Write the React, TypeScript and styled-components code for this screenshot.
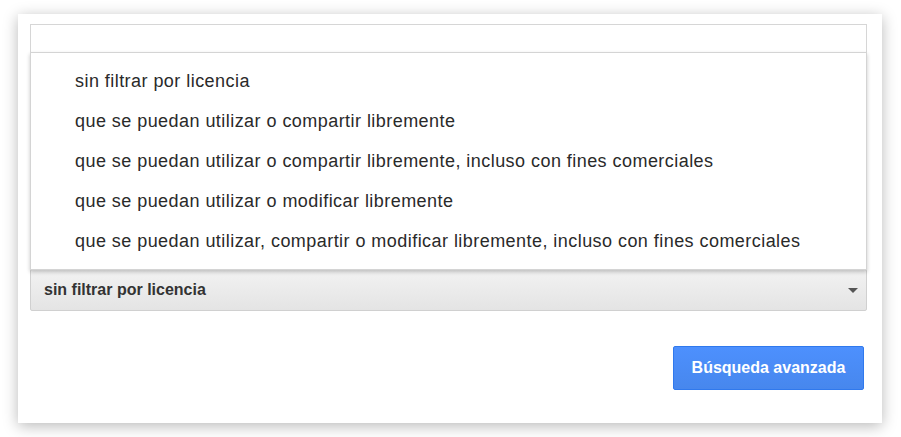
import styled, { createGlobalStyle } from "styled-components";

const GlobalStyle = createGlobalStyle`
  html, body {
    margin: 0;
    padding: 0;
    background: #ffffff;
  }
  body {
    font-family: "Liberation Sans", Arial, sans-serif;
  }
`;

const licenses = [
  "sin filtrar por licencia",
  "que se puedan utilizar o compartir libremente",
  "que se puedan utilizar o compartir libremente, incluso con fines comerciales",
  "que se puedan utilizar o modificar libremente",
  "que se puedan utilizar, compartir o modificar libremente, incluso con fines comerciales",
];

const Page = styled.div`
  padding: 14px 19px 14px 18px;
  width: 864px;
`;

const Card = styled.div`
  box-sizing: border-box;
  width: 864px;
  height: 409px;
  background: #fff;
  padding: 10px 15px 0 12px;
  box-shadow: 0 3px 14px rgba(0, 0, 0, 0.28);
  display: flex;
  flex-direction: column;
`;

const Field = styled.div`
  position: relative;
`;

const SearchInput = styled.div`
  box-sizing: border-box;
  height: 28px;
  border: 1px solid #d6d6d6;
  border-bottom: none;
  background: #fff;
`;

const Menu = styled.ul`
  position: absolute;
  top: 100%;
  left: 0;
  right: 0;
  margin: 0;
  padding: 8px 0;
  list-style: none;
  background: #fff;
  border: 1px solid #d4d4d4;
  box-shadow: 0 2px 4px rgba(0, 0, 0, 0.22);
  z-index: 2;
`;

const MenuItem = styled.li`
  height: 40px;
  line-height: 40px;
  padding-left: 44px;
  font-size: 18px;
  letter-spacing: 0.45px;
  color: #2a2a2a;
  white-space: nowrap;
`;

const Select = styled.div`
  box-sizing: border-box;
  margin-top: 217px;
  height: 42px;
  border: 1px solid #d0d0d0;
  border-radius: 2px;
  background: linear-gradient(#f2f2f2, #e4e4e4);
  display: flex;
  align-items: center;
  justify-content: space-between;
  padding: 0 8px 0 13px;
  font-size: 16px;
  font-weight: bold;
  color: #333;
`;

const Arrow = styled.span`
  width: 0;
  height: 0;
  border-left: 5px solid transparent;
  border-right: 5px solid transparent;
  border-top: 5px solid #555;
`;

const Actions = styled.div`
  display: flex;
  justify-content: flex-end;
  margin-top: 35px;
  padding-right: 3px;
`;

const Button = styled.button`
  box-sizing: border-box;
  width: 191px;
  height: 44px;
  border: 1px solid #3079ed;
  border-radius: 2px;
  background: linear-gradient(#4d90fe, #4787ed);
  color: #fff;
  font-family: "Liberation Sans", Arial, sans-serif;
  font-size: 16px;
  font-weight: bold;
  padding: 0;
`;

export default function App() {
  return (
    <Page>
      <GlobalStyle />
      <Card>
        <Field>
          <SearchInput />
          <Menu>
            {licenses.map((l) => (
              <MenuItem key={l}>{l}</MenuItem>
            ))}
          </Menu>
        </Field>
        <Select>
          <span>sin filtrar por licencia</span>
          <Arrow />
        </Select>
        <Actions>
          <Button>Búsqueda avanzada</Button>
        </Actions>
      </Card>
    </Page>
  );
}
